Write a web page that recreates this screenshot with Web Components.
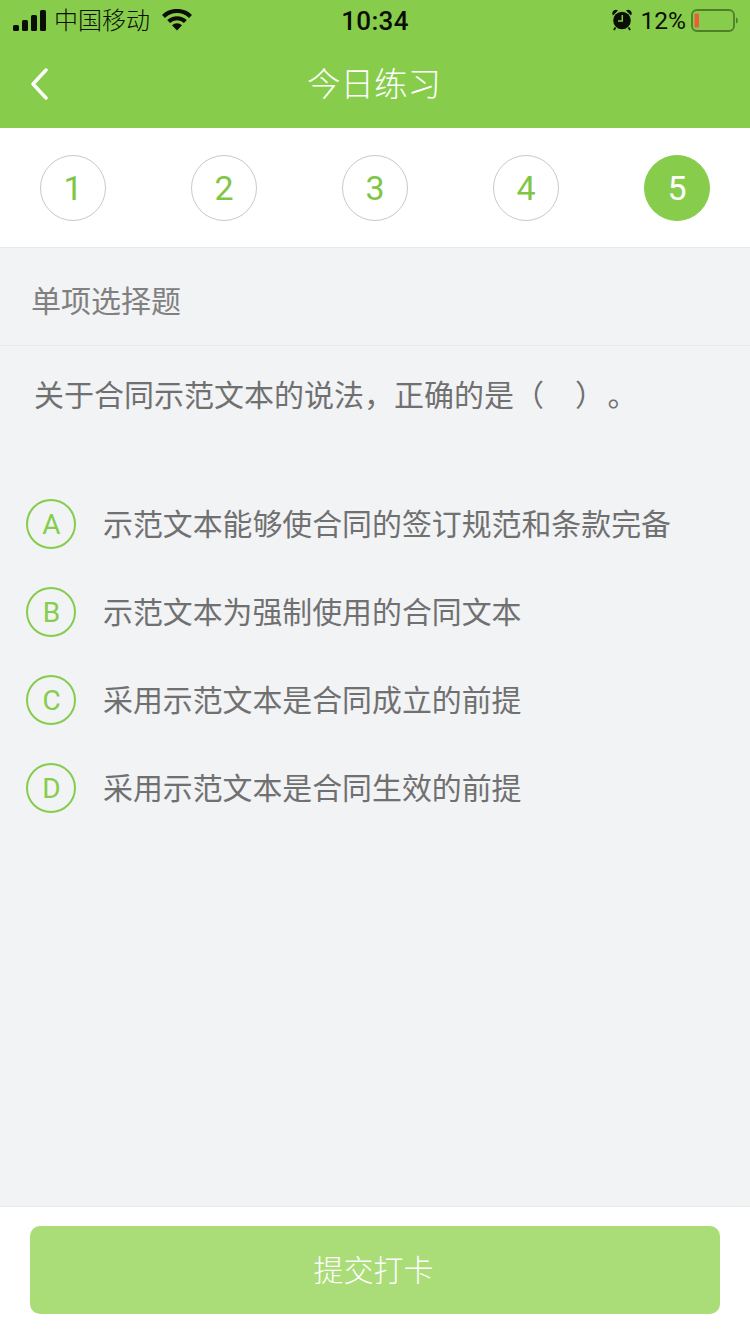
<!DOCTYPE html>
<html lang="zh">
<head>
<meta charset="utf-8">
<title>今日练习</title>
<style>
  html, body { margin: 0; padding: 0; }
  body {
    width: 750px;
    height: 1334px;
    overflow: hidden;
    background: #f2f3f5;
    font-family: "Liberation Sans", "Noto Sans CJK SC", sans-serif;
  }
  practice-page { height: 1334px; }
</style>
</head>
<body>
<practice-page>
  <status-bar slot="top"></status-bar>
  <nav-bar slot="top">今日练习</nav-bar>
  <step-bar slot="top" count="5" current="5"></step-bar>
  <question-head>单项选择题</question-head>
  <question-text>关于合同示范文本的说法，正确的是（&nbsp;&nbsp;&nbsp;&#8201;）&#8202;。</question-text>
  <option-list>
    <option-row letter="A">示范文本能够使合同的签订规范和条款完备</option-row>
    <option-row letter="B">示范文本为强制使用的合同文本</option-row>
    <option-row letter="C">采用示范文本是合同成立的前提</option-row>
    <option-row letter="D">采用示范文本是合同生效的前提</option-row>
  </option-list>
  <submit-bar slot="bottom">提交打卡</submit-bar>
</practice-page>

<script>
const FONT = '"Liberation Sans", "Noto Sans CJK SC", sans-serif';
const NUM_FONT = 'Roboto, "Liberation Sans", sans-serif';

class PracticePage extends HTMLElement {
  connectedCallback() {
    this.attachShadow({ mode: 'open' });
    this.shadowRoot.innerHTML = `
      <style>
        :host { display: flex; flex-direction: column; width: 750px; }
        main { flex: 1; min-height: 0; }
      </style>
      <slot name="top"></slot>
      <main><slot></slot></main>
      <slot name="bottom"></slot>
    `;
  }
}

class StatusBar extends HTMLElement {
  connectedCallback() {
    this.attachShadow({ mode: 'open' });
    this.shadowRoot.innerHTML = `
      <style>
        :host {
          display: grid;
          grid-template-columns: 1fr auto 1fr;
          align-items: center;
          height: 40px;
          padding: 0 12px 0 13px;
          background: #87cd4b;
          color: #0a0f05;
          font-family: ${FONT};
        }
        .left, .right { display: flex; align-items: center; }
        .right { justify-content: flex-end; }
        .carrier { font-size: 24px; font-weight: 300; margin: 0 12px 3px 8px; }
        .time { font-family: ${NUM_FONT}; font-size: 26px; font-weight: 500; letter-spacing: 0.3px; padding: 1px 1px 0 0; }
        .pct { font-family: ${NUM_FONT}; font-size: 24.500px; margin: 0 5px 0 9px; }
        svg { display: block; }
      </style>
      <div class="left">
        <svg width="33" height="21" viewBox="0 0 33 21">
          <rect x="0" y="15" width="6" height="6" rx="1.500" fill="#0a0f05"/>
          <rect x="9" y="10" width="6" height="11" rx="1.500" fill="#0a0f05"/>
          <rect x="18" y="5" width="6" height="16" rx="1.500" fill="#0a0f05"/>
          <rect x="27" y="0" width="6" height="21" rx="1.500" fill="#0a0f05"/>
        </svg>
        <span class="carrier">中国移动</span>
        <svg width="30" height="22" viewBox="0 0 30 22">
          <path d="M1.500 7.400a19.500 19.500 0 0 1 27 0" fill="none" stroke="#0a0f05" stroke-width="4.200"/>
          <path d="M6.600 12.600a12.200 12.200 0 0 1 16.800 0" fill="none" stroke="#0a0f05" stroke-width="4.200"/>
          <path d="M10 16.200a7.200 7.200 0 0 1 10 0L15 21.500z" fill="#0a0f05"/>
        </svg>
      </div>
      <span class="time">10:34</span>
      <div class="right">
        <svg width="20" height="22" viewBox="0 0 20 22">
          <path d="M1 6.400a3.600 3.600 0 0 1 5-5zM19 6.400a3.600 3.600 0 0 0-5-5z" fill="#0a0f05"/>
          <path d="M3.500 18.500l-1.600 2.400M16.500 18.500l1.600 2.400" stroke="#0a0f05" stroke-width="1.800"/>
          <circle cx="10" cy="11.500" r="8.800" fill="#0a0f05"/>
          <path d="M10.300 6v6H6" fill="none" stroke="#87cd4b" stroke-width="1.500"/>
        </svg>
        <span class="pct">12%</span>
        <svg width="47" height="23" viewBox="0 0 47 23">
          <rect x="1" y="1" width="42" height="21" rx="5" fill="none" stroke="#4f7f2b" stroke-width="1.800"/>
          <rect x="3.500" y="4.500" width="4.500" height="14" rx="1" fill="#e8603a"/>
          <path d="M45 8.500c1.400.5 1.800 1.600 1.800 3s-.4 2.500-1.800 3z" fill="#4f7f2b"/>
        </svg>
      </div>
    `;
  }
}

class NavBar extends HTMLElement {
  connectedCallback() {
    this.attachShadow({ mode: 'open' });
    this.shadowRoot.innerHTML = `
      <style>
        :host {
          display: grid;
          grid-template-columns: 1fr auto 1fr;
          align-items: center;
          height: 88px;
          background: #87cd4b;
          color: #fff;
          font-family: ${FONT};
          font-size: 33.500px;
          font-weight: 300;
        }
        .back { padding-left: 30px; display: flex; }
        .title { padding: 0 2px 6px 0; }
        svg { display: block; }
      </style>
      <div class="back">
        <svg width="18" height="32" viewBox="0 0 18 32">
          <path d="M16 2L3 16l13 14" fill="none" stroke="#fff" stroke-width="3.400" stroke-linecap="round" stroke-linejoin="round"/>
        </svg>
      </div>
      <div class="title"><slot></slot></div>
      <div></div>
    `;
  }
}

class StepBar extends HTMLElement {
  connectedCallback() {
    this.attachShadow({ mode: 'open' });
    const count = Number(this.getAttribute('count'));
    const current = Number(this.getAttribute('current'));
    let items = '';
    for (let i = 1; i <= count; i++) {
      items += `<div class="step${i === current ? ' on' : ''}">${i}</div>`;
    }
    this.shadowRoot.innerHTML = `
      <style>
        :host {
          display: flex;
          justify-content: space-between;
          align-items: center;
          box-sizing: border-box;
          height: 120px;
          padding: 0 40px;
          background: #fff;
          border-bottom: 1px solid #e9eaec;
          font-family: ${NUM_FONT};
        }
        .step {
          box-sizing: border-box;
          width: 66px;
          height: 66px;
          border: 1px solid #c9c9c9;
          border-radius: 50%;
          display: flex;
          align-items: center;
          justify-content: center;
          color: #7fc646;
          font-size: 34px;
          font-weight: 400;
        }
        .on { background: #87cd4b; border-color: #87cd4b; color: #fff; }
      </style>
      ${items}
    `;
  }
}

class QuestionHead extends HTMLElement {
  connectedCallback() {
    this.attachShadow({ mode: 'open' });
    this.shadowRoot.innerHTML = `
      <style>
        :host {
          display: flex;
          align-items: center;
          box-sizing: border-box;
          height: 98px;
          padding: 4px 0 0 31px;
          border-bottom: 1px solid #e9eaec;
          color: #808080;
          font-size: 30px;
          font-family: ${FONT};
        }
      </style>
      <slot></slot>
    `;
  }
}

class QuestionText extends HTMLElement {
  connectedCallback() {
    this.attachShadow({ mode: 'open' });
    this.shadowRoot.innerHTML = `
      <style>
        :host {
          display: block;
          padding: 30px 0 0 34px;
          height: 90px;
          line-height: 40px;
          color: #707070;
          font-size: 30px;
          font-family: ${FONT};
          white-space: nowrap;
        }
      </style>
      <slot></slot>
    `;
  }
}

class OptionList extends HTMLElement {
  connectedCallback() {
    this.attachShadow({ mode: 'open' });
    this.shadowRoot.innerHTML = `
      <style>
        :host { display: flex; flex-direction: column; gap: 38px; padding: 33px 0 0 26px; }
      </style>
      <slot></slot>
    `;
  }
}

class OptionRow extends HTMLElement {
  connectedCallback() {
    this.attachShadow({ mode: 'open' });
    this.shadowRoot.innerHTML = `
      <style>
        :host {
          display: flex;
          align-items: center;
          gap: 27px;
          height: 50px;
          color: #707070;
          font-size: 29.900px;
          font-family: ${FONT};
        }
        .mark {
          box-sizing: border-box;
          width: 50px;
          height: 50px;
          flex: none;
          border: 2px solid #86cc4d;
          border-radius: 50%;
          display: flex;
          align-items: center;
          justify-content: center;
          color: #86cc4d;
          font-family: ${NUM_FONT};
          font-size: 28px;
          padding-left: 1px;
        }
        .label { padding-bottom: 4px; }
      </style>
      <div class="mark">${this.getAttribute('letter')}</div>
      <div class="label"><slot></slot></div>
    `;
  }
}

class SubmitBar extends HTMLElement {
  connectedCallback() {
    this.attachShadow({ mode: 'open' });
    this.shadowRoot.innerHTML = `
      <style>
        :host {
          display: block;
          box-sizing: border-box;
          height: 128px;
          padding: 19px 30px 0;
          background: #fff;
          border-top: 1px solid #e9eaec;
          font-family: ${FONT};
        }
        .btn {
          box-sizing: border-box;
          height: 88px;
          padding: 0 3px 4px 0;
          border-radius: 10px;
          background: #aadc78;
          color: #fff;
          font-size: 30px;
          font-weight: 300;
          display: flex;
          align-items: center;
          justify-content: center;
        }
      </style>
      <div class="btn"><slot></slot></div>
    `;
  }
}

customElements.define('practice-page', PracticePage);
customElements.define('status-bar', StatusBar);
customElements.define('nav-bar', NavBar);
customElements.define('step-bar', StepBar);
customElements.define('question-head', QuestionHead);
customElements.define('question-text', QuestionText);
customElements.define('option-list', OptionList);
customElements.define('option-row', OptionRow);
customElements.define('submit-bar', SubmitBar);
</script>
</body>
</html>
